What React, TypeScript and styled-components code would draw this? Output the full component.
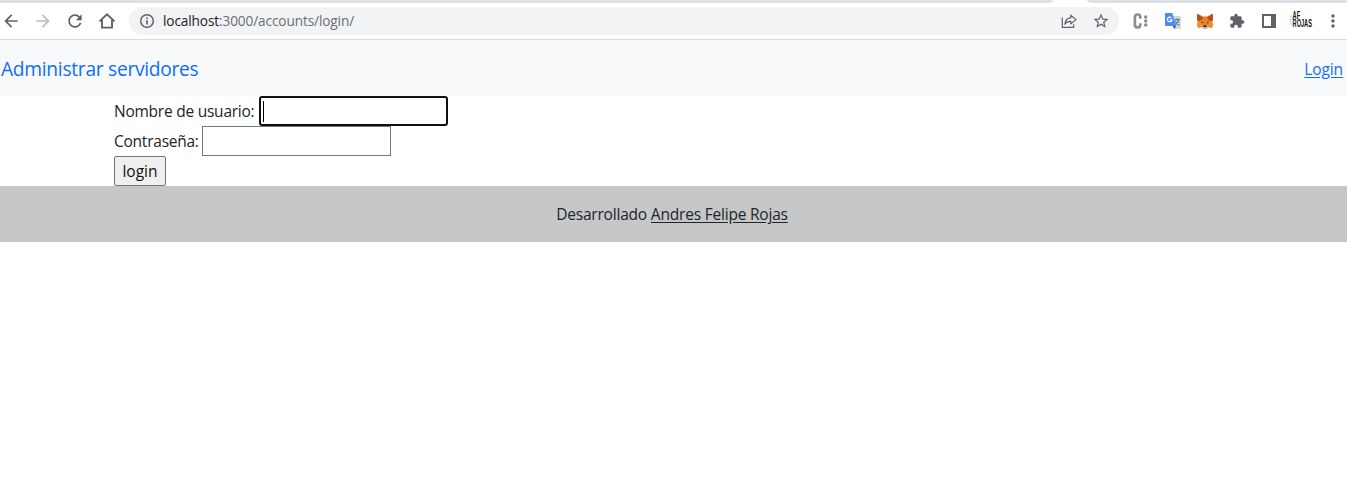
import React from "react";
import styled, { createGlobalStyle } from "styled-components";

const GlobalStyle = createGlobalStyle`
  * { box-sizing: border-box; }
  body {
    margin: 0;
    background: #fff;
    color: #212529;
    font-family: "Open Sans", "Noto Sans", sans-serif;
    font-size: 15.5px;
    font-weight: 400;
    line-height: 24px;
    overflow: hidden;
  }
`;

const TabStrip = styled.div`
  display: flex;
  justify-content: space-between;
  height: 3px;
  background: #fff;
`;

const TabStripPart = styled.div<{ $width: number; $side: "left" | "right" }>`
  width: ${(p) => p.$width}px;
  background: #dee1e6;
  border-bottom-${(p) => (p.$side === "left" ? "right" : "left")}-radius: 5px 3px;
`;

const Toolbar = styled.div`
  display: flex;
  align-items: center;
  height: 37px;
  padding-right: 3px;
  background: #fff;
  border-bottom: 1px solid #dadce0;
`;

const IconGroup = styled.div`
  display: flex;
  gap: 10px;
`;

const IconCell = styled.span`
  display: flex;
  align-items: center;
  justify-content: center;
  width: 22px;
  height: 22px;
  color: #5f6368;
  svg { display: block; overflow: visible; }
`;

const AddressBar = styled.div`
  display: flex;
  flex: 1;
  align-items: center;
  height: 28px;
  margin: 0 11px;
  padding: 0 7px;
  border-radius: 14px;
  background: #f1f3f4;
`;

const Url = styled.span`
  flex: 1;
  margin-left: 5px;
  color: #6b6f73;
  font-size: 13.6px;
  letter-spacing: -0.1px;
  line-height: 20px;
  b { color: #202124; font-weight: 400; }
`;

const Navbar = styled.nav`
  display: flex;
  align-items: center;
  justify-content: space-between;
  height: 56px;
  padding: 0 4px 0 1px;
  background: #f8f9fa;
`;

const Brand = styled.a`
  padding-top: 1px;
  color: #0d6efd;
  font-size: 19.2px;
  line-height: 30px;
  letter-spacing: -0.28px;
  white-space: nowrap;
`;

const NavLink = styled.a`
  padding-top: 1px;
  color: #0d6efd;
  text-decoration: underline;
  text-underline-offset: 2px;
  letter-spacing: -0.1px;
`;

const Form = styled.form`
  display: flex;
  flex-direction: column;
  align-items: flex-start;
  padding-left: 114px;
`;

const Field = styled.div`
  display: flex;
  align-items: center;
  height: 30px;
`;

const Label = styled.label<{ $width: number }>`
  width: ${(p) => p.$width}px;
  white-space: nowrap;
  letter-spacing: -0.24px;
`;

const Input = styled.div<{ $focused?: boolean }>`
  display: flex;
  align-items: center;
  width: 189px;
  height: 30px;
  padding-left: ${(p) => (p.$focused ? 2 : 3)}px;
  border: ${(p) => (p.$focused ? "2px solid #101010" : "1px solid #767676")};
  border-radius: ${(p) => (p.$focused ? 3 : 0)}px;
  background: #fff;
`;

const Caret = styled.span`
  width: 1px;
  height: 21px;
  background: #000;
`;

const Submit = styled.button`
  width: 52px;
  height: 30px;
  padding: 0;
  border: 1px solid #767676;
  border-radius: 2px;
  background: #efefef;
  color: #111;
  font: inherit;
`;

const Footer = styled.footer`
  height: 56px;
  padding: 16px 3px 16px 0;
  background: #c6c7c8;
  text-align: center;
  letter-spacing: -0.2px;
  a { color: #212529; text-decoration: underline; text-underline-offset: 2px; }
`;

const Glyph = ({ d, size = 20, color = "currentColor" }: { d: string; size?: number; color?: string }) => (
  <svg width={size} height={size} viewBox="0 0 24 24" fill={color}>
    <path d={d} />
  </svg>
);

const InfoIcon = () => (
  <svg width="16" height="16" viewBox="0 0 16 16" fill="none" stroke="currentColor" strokeWidth="1.5">
    <circle cx="8" cy="8" r="6.3" />
    <path d="M8 7.2v4.2M8 4.5v1.5" strokeWidth="1.7" />
  </svg>
);

const HomeIcon = () => (
  <svg width="18" height="18" viewBox="0 0 18 18" fill="none" stroke="currentColor" strokeWidth="1.9">
    <path d="M1.5 9.4 9 2.2l7.500 7.200M4 8v7.600h10V8" />
  </svg>
);

const ShareIcon = () => (
  <svg width="16" height="16" viewBox="0 0 16 16" fill="none" stroke="currentColor" strokeWidth="1.2">
    <path d="M1.300 4.500v9.800h11.400v-3" />
    <path d="M9.800 2.200 15 6.600l-5.200 4.300V8.400C7 8.400 5 9.300 3.800 11.300 4.300 7.500 6.300 5 9.800 4.700z" strokeLinejoin="round" />
  </svg>
);

const ColonIcon = () => (
  <svg width="16" height="16" viewBox="0 0 16 16" fill="none">
    <path d="M7.300 5.700V4.300C7.300 2.500 6.400 1.500 4.600 1.500S1.900 2.500 1.900 4.300v7.400c0 1.800.9 2.800 2.700 2.800s2.700-1 2.700-2.800v-1.400" stroke="#8e8e8e" strokeWidth="2.700" />
    <g fill="#8e8e8e">
      <circle cx="12.700" cy="4" r="1.800" />
      <circle cx="12.700" cy="8" r="1.800" />
      <circle cx="12.700" cy="12" r="1.800" />
    </g>
  </svg>
);

const TranslateIcon = () => (
  <svg width="16" height="16" viewBox="0 0 16 16">
    <path d="M6 3h9.200c.5 0 .8.300.8.800V15c0 .6-.3 1-.8 1H9.500z" fill="#d5d8db" />
    <path d="M9.300 6.700h5.500M12 5.300v1.400M14 6.700c-.6 2.500-2 4-4 5.200M10.200 8.200c.9 1.800 2.300 3 4.200 3.800" stroke="#607d8b" strokeWidth="1.200" fill="none" />
    <path d="M.8 0h6.500L11.300 13H.8C.3 13 0 12.700 0 12.200V.8C0 .3.300 0 .8 0z" fill="#4b8bf5" />
    <path d="M7.500 13h3.800l-2 3z" fill="#3267cf" />
    <path d="M6.400 4.800A2.300 2.300 0 1 0 7 6.800H4.800" fill="none" stroke="#fff" strokeWidth="1.200" />
  </svg>
);

const FoxIcon = () => (
  <svg width="18" height="18" viewBox="0 0 18 18">
    <path d="M1.300 1.800 7 4.600h4l5.700-2.800.3 5-.9 3 .9 3.100-1.200 3-3.300-.7-2.200 1.500H7.700l-2.200-1.500-3.300.7-1.200-3 .9-3.100-.9-3z" fill="#ee7d22" />
    <path d="M1.300 1.800 7 5.500 5.300 8.200l-3.600 1-.7-2.400zM16.700 1.800 11 5.500l1.700 2.700 3.600 1 .7-2.400z" fill="#a85322" />
    <path d="M1.900 9.600 5.400 8.500 7.200 11l-.5 3-4.500 1.500-1.200-2.600zM16.100 9.600l-3.500-1.100L10.800 11l.5 3 4.500 1.500 1.200-2.600z" fill="#f58a29" />
    <path d="M4.700 9.600l2.200.7-.4 1.500zM13.300 9.600l-2.200.7.400 1.500z" fill="#293746" />
    <path d="M5.500 15.200 7.300 13h3.400l1.800 2.200-2.200 1.500H7.700z" fill="#cbb9aa" />
    <path d="M7.700 13.300h2.600l.6 1.700H7.100z" fill="#202b35" />
  </svg>
);

const PanelIcon = () => (
  <svg width="14" height="14" viewBox="0 0 14 14">
    <path fillRule="evenodd" d="M0 0h14v14H0zM2 2v10h7V2z" fill="currentColor" />
  </svg>
);

const ProfileIcon = () => (
  <svg width="20" height="20" viewBox="0 0 20 20">
    <path d="M.300 4.500Q-1.200 9.500.300 14.500" stroke="#a5dfdc" strokeWidth="1.200" fill="none" />
    <text
      transform="translate(1.600 0) scale(.56 1)"
      fill="#111"
      fontFamily="Liberation Sans, sans-serif"
      fontWeight="700"
      fontSize="10"
    >
      <tspan x="0" y="7.800">AF</tspan>
      <tspan x="0" y="16.500">ROJAS</tspan>
    </text>
  </svg>
);

const BACK = "M20 11H7.830l5.590-5.590L12 4l-8 8 8 8 1.410-1.410L7.830 13H20v-2z";
const FORWARD = "M12 4l-1.410 1.410L16.170 11H4v2h12.170l-5.580 5.590L12 20l8-8z";
const RELOAD =
  "M17.650 6.350C16.200 4.900 14.210 4 12 4c-4.420 0-7.990 3.580-7.990 8s3.570 8 7.990 8c3.730 0 6.840-2.550 7.730-6h-2.080c-.82 2.330-3.040 4-5.650 4-3.310 0-6-2.690-6-6s2.690-6 6-6c1.660 0 3.140.69 4.220 1.780L13 11h7V4l-2.350 2.350z";
const STAR =
  "M22 9.240l-7.190-.62L12 2 9.190 8.630 2 9.240l5.460 4.730L5.820 21 12 17.270 18.180 21l-1.630-7.030L22 9.240zM12 15.400l-3.760 2.270 1-4.280-3.320-2.880 4.380-.38L12 6.100l1.710 4.040 4.380.38-3.320 2.880 1 4.280L12 15.400z";
const PUZZLE =
  "M20.500 11H19V7c0-1.100-.9-2-2-2h-4V3.500C13 2.120 11.880 1 10.500 1S8 2.120 8 3.500V5H4c-1.100 0-1.990.9-1.990 2v3.800H3.500c1.490 0 2.700 1.210 2.700 2.700s-1.210 2.700-2.700 2.700H2V20c0 1.100.9 2 2 2h3.800v-1.500c0-1.490 1.210-2.700 2.700-2.700 1.490 0 2.700 1.210 2.700 2.700V22H17c1.100 0 2-.9 2-2v-4h1.500c1.380 0 2.500-1.120 2.500-2.500S21.880 11 20.500 11z";
const MORE =
  "M12 8c1.100 0 2-.9 2-2s-.9-2-2-2-2 .9-2 2 .9 2 2 2zm0 2c-1.100 0-2 .9-2 2s.9 2 2 2 2-.9 2-2-.9-2-2-2zm0 6c-1.100 0-2 .9-2 2s.9 2 2 2 2-.9 2-2-.9-2-2-2z";

export default function App() {
  return (
    <>
      <GlobalStyle />
      <TabStrip>
        <TabStripPart $width={1053} $side="left" />
        <TabStripPart $width={260} $side="right" />
      </TabStrip>
      <Toolbar>
        <IconGroup>
          <IconCell><Glyph d={BACK} /></IconCell>
          <IconCell><Glyph d={FORWARD} color="#babcbe" /></IconCell>
          <IconCell><Glyph d={RELOAD} /></IconCell>
          <IconCell><HomeIcon /></IconCell>
        </IconGroup>
        <AddressBar>
          <IconCell><InfoIcon /></IconCell>
          <Url><b>localhost</b>:3000/accounts/login/</Url>
          <IconGroup>
            <IconCell><ShareIcon /></IconCell>
            <IconCell><Glyph d={STAR} size={18} /></IconCell>
          </IconGroup>
        </AddressBar>
        <IconGroup>
          <IconCell><ColonIcon /></IconCell>
          <IconCell><TranslateIcon /></IconCell>
          <IconCell><FoxIcon /></IconCell>
          <IconCell><Glyph d={PUZZLE} size={16} /></IconCell>
          <IconCell><PanelIcon /></IconCell>
          <IconCell><ProfileIcon /></IconCell>
          <IconCell><Glyph d={MORE} size={20} /></IconCell>
        </IconGroup>
      </Toolbar>
      <Navbar>
        <Brand>Administrar servidores</Brand>
        <NavLink>Login</NavLink>
      </Navbar>
      <Form>
        <Field>
          <Label $width={145}>Nombre de usuario:</Label>
          <Input $focused><Caret /></Input>
        </Field>
        <Field>
          <Label $width={88}>Contraseña:</Label>
          <Input />
        </Field>
        <Submit type="button">login</Submit>
      </Form>
      <Footer>
        Desarrollado <a>Andres Felipe Rojas</a>
      </Footer>
    </>
  );
}
